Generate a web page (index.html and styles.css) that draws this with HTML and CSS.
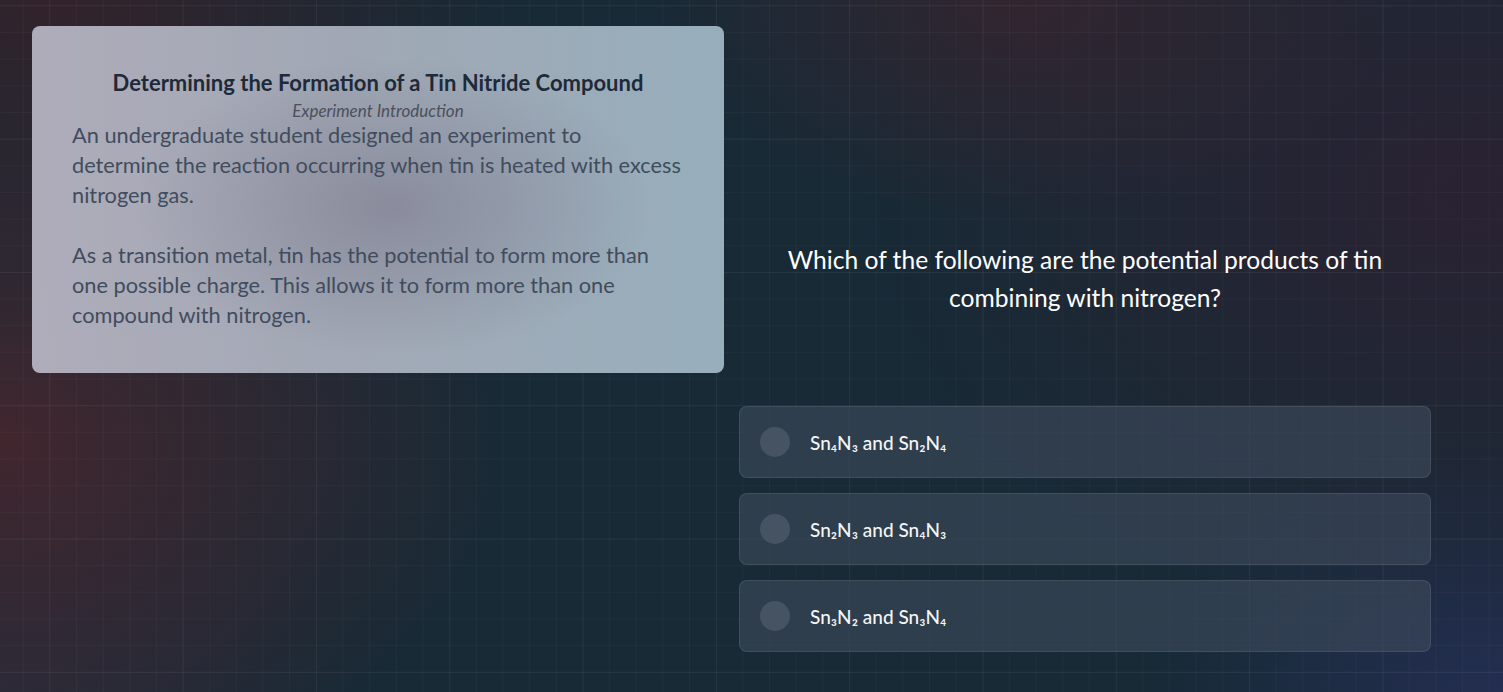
FILE: index.html
```html
<!DOCTYPE html>
<html lang="en">
<head>
<meta charset="utf-8">
<title>Tin Nitride Experiment</title>
<link rel="stylesheet" href="styles.css">
</head>
<body>
<main class="layout">
  <section class="intro-card">
    <h1 class="intro-title">Determining the Formation of a Tin Nitride Compound</h1>
    <p class="intro-subtitle">Experiment Introduction</p>
    <div class="intro-body">
      <p>An undergraduate student designed an experiment to determine the reaction occurring when tin is heated with excess nitrogen gas.</p>
      <p>As a transition metal, tin has the potential to form more than one possible charge. This allows it to form more than one compound with nitrogen.</p>
    </div>
  </section>
  <section class="question-panel">
    <h2 class="question">Which of the following are the potential products of tin combining with nitrogen?</h2>
    <ul class="options">
      <li class="option"><span class="radio"></span><span class="option-text">Sn₄N₃ and Sn₂N₄</span></li>
      <li class="option"><span class="radio"></span><span class="option-text">Sn₂N₃ and Sn₄N₃</span></li>
      <li class="option"><span class="radio"></span><span class="option-text">Sn₃N₂ and Sn₃N₄</span></li>
    </ul>
  </section>
</main>
</body>
</html>
```
FILE: styles.css
```css
html, body {
  margin: 0;
  padding: 0;
}

body {
  width: 1503px;
  height: 692px;
  overflow: hidden;
  font-family: Lato, "Noto Sans", "Liberation Sans", sans-serif;
  background-color: #172a36;
  background-image:
    linear-gradient(rgba(255,255,255,0.035) 1px, transparent 1px),
    linear-gradient(90deg, rgba(255,255,255,0.035) 1px, transparent 1px),
    linear-gradient(rgba(255,255,255,0.028) 1px, transparent 1px),
    linear-gradient(90deg, rgba(255,255,255,0.028) 1px, transparent 1px),
    radial-gradient(ellipse 520px 360px at 0% 64%, rgba(68,38,46,0.95), rgba(68,38,46,0) 100%),
    radial-gradient(ellipse 460px 300px at 4% 0%, rgba(52,34,42,0.95), rgba(52,34,42,0) 100%),
    radial-gradient(ellipse 380px 220px at 68% 0%, rgba(56,36,46,0.8), rgba(56,36,46,0) 100%),
    radial-gradient(ellipse 620px 440px at 98% 28%, rgba(42,34,50,1), rgba(42,34,50,0) 100%),
    radial-gradient(ellipse 360px 260px at 100% 100%, rgba(36,46,82,0.95), rgba(36,46,82,0) 100%),
    radial-gradient(ellipse 360px 260px at 0% 100%, rgba(40,44,60,0.75), rgba(40,44,60,0) 100%);
  background-size:
    133.333px 133.333px,
    133.333px 133.333px,
    26.6667px 26.6667px,
    26.6667px 26.6667px,
    100% 100%, 100% 100%, 100% 100%, 100% 100%, 100% 100%, 100% 100%;
  background-position:
    49.33px 5.33px,
    49.33px 5.33px,
    22.67px 5.33px,
    22.67px 5.33px,
    0 0, 0 0, 0 0, 0 0, 0 0, 0 0;
  background-repeat: repeat, repeat, repeat, repeat, no-repeat, no-repeat, no-repeat, no-repeat, no-repeat, no-repeat;
}

.layout {
  display: grid;
  grid-template-columns: 692px 692px;
  column-gap: 15px;
  padding: 26px 0 0 32px;
  align-items: start;
}

.intro-card {
  border-radius: 8px;
  padding: 42px 40px 43px;
  background-color: #a2adb8;
  background-image:
    radial-gradient(ellipse 260px 150px at 52% 52%, rgba(120,116,136,0.55), rgba(120,116,136,0) 100%),
    linear-gradient(90deg, rgba(176,172,186,0.9) 0%, rgba(160,164,178,0.6) 45%, rgba(150,174,188,0.9) 100%),
    linear-gradient(180deg, rgba(255,255,255,0) 60%, rgba(170,178,190,0.6) 100%);
}

.intro-title {
  margin: 0;
  font-size: 22px;
  line-height: 30px;
  font-weight: 700;
  color: #1e2a3a;
  text-align: center;
}

.intro-subtitle {
  margin: 4px 0 0;
  font-size: 17px;
  line-height: 18px;
  font-style: italic;
  font-weight: 400;
  color: #4b505b;
  text-align: center;
}

.intro-body p {
  margin: 0 0 30px;
  font-size: 21.75px;
  line-height: 30px;
  font-weight: 400;
  color: #414c5d;
}

.intro-body p:last-child {
  margin-bottom: 0;
}

.question-panel {
  padding-top: 215px;
}

.question {
  margin: 0;
  font-size: 24.6px;
  line-height: 38px;
  font-weight: 400;
  color: #ffffff;
  text-align: center;
}

.options {
  list-style: none;
  margin: 89px 0 0;
  padding: 0;
  display: flex;
  flex-direction: column;
  gap: 15px;
}

.option {
  display: flex;
  align-items: center;
  gap: 20px;
  height: 72px;
  box-sizing: border-box;
  padding-left: 20px;
  border: 1px solid rgba(255,255,255,0.09);
  border-radius: 8px;
  background: rgba(62,74,92,0.62);
}

.radio {
  width: 30px;
  height: 30px;
  border-radius: 50%;
  background: #465362;
  flex: none;
}

.option-text {
  font-size: 19px;
  font-weight: 500;
  color: #f4f5f7;
}
```
